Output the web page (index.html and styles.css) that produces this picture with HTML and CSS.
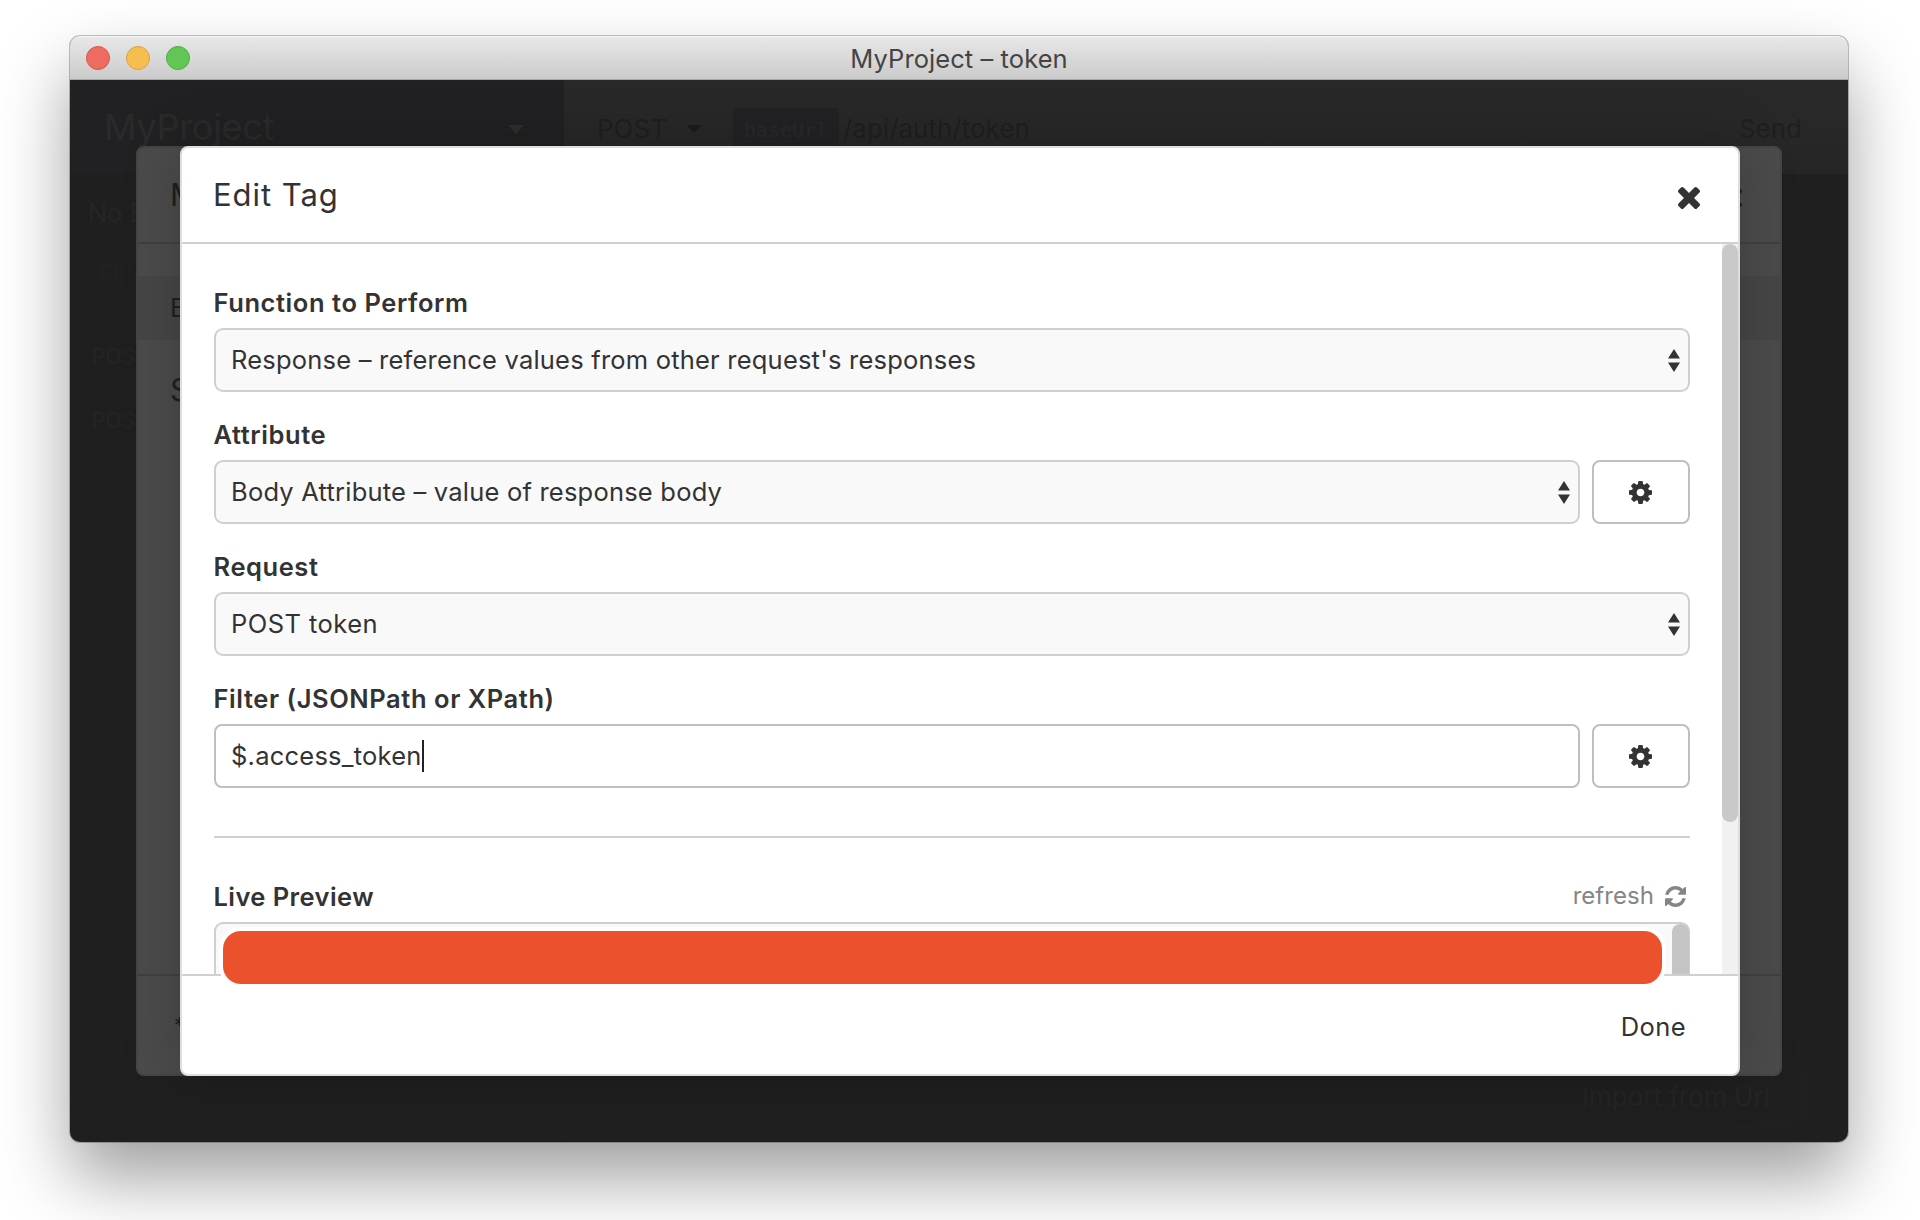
FILE: index.html
```html
<!DOCTYPE html>
<html lang="en">
<head>
<meta charset="utf-8">
<title>MyProject – token</title>
<link rel="stylesheet" href="styles.css">
</head>
<body>
<svg class="defs" aria-hidden="true">
  <symbol id="times" viewBox="302 366 1188 1188"><path d="M1490 1322q0 40-28 68l-136 136q-28 28-68 28t-68-28l-294-294-294 294q-28 28-68 28t-68-28l-136-136q-28-28-28-68t28-68l294-294-294-294q-28-28-28-68t28-68l136-136q28-28 68-28t68 28l294 294 294-294q28-28 68-28t68 28l136 136q28 28 28 68t-28 68l-294 294 294 294q28 28 28 68z"/></symbol>
  <symbol id="cog" viewBox="0 128 1536 1536"><path d="M1024 896q0-106-75-181t-181-75-181 75-75 181 75 181 181 75 181-75 75-181zm512-109v222q0 12-8 23t-20 13l-185 28q-19 54-39 91 35 50 107 138 10 12 10 25t-9 23q-27 37-99 108t-94 71q-12 0-26-9l-138-108q-44 23-91 38-16 136-29 186-7 28-36 28h-222q-14 0-24.500-8.500t-11.500-21.500l-28-184q-49-16-90-37l-141 107q-10 9-25 9-14 0-25-11-126-114-165-168-7-10-7-23 0-12 8-23 15-21 51-66.500t54-70.500q-27-50-41-99l-183-27q-13-2-21-12.500t-8-23.500v-222q0-12 8-23t19-13l186-28q14-46 39-92-40-57-107-138-10-12-10-24 0-10 9-23 26-36 98.500-107.500t94.500-71.500q13 0 26 10l138 107q44-23 91-38 16-136 29-186 7-28 36-28h222q14 0 24.500 8.500t11.500 21.500l28 184q49 16 90 37l142-107q9-9 24-9 13 0 25 10 129 119 165 170 7 8 7 22 0 12-8 23-15 21-51 66.500t-54 70.500q26 50 41 98l183 28q13 2 21 12.500t8 23.500z"/></symbol>
  <symbol id="refresh" viewBox="128 128 1536 1536"><path d="M1639 1056q0 5-1 7-64 268-268 434.500t-478 166.500q-146 0-282.500-55t-243.500-157l-129 129q-19 19-45 19t-45-19-19-45v-448q0-26 19-45t45-19h448q26 0 45 19t19 45-19 45l-137 137q71 66 161 102t187 36q134 0 250-65t186-179q11-17 53-117 8-23 30-23h192q13 0 22.500 9.500t9.500 22.500zm25-800v448q0 26-19 45t-45 19h-448q-26 0-45-19t-19-45 19-45l138-138q-148-137-349-137-134 0-250 65t-186 179q-11 17-53 117-8 23-30 23h-199q-13 0-22.500-9.500t-9.500-22.500v-7q65-268 270-434.500t480-166.500q146 0 284 55.500t245 156.500l130-129q19-19 45-19t45 19 19 45z"/></symbol>
  <symbol id="updown" viewBox="0 0 12 23"><path d="M6 0l6 9.500H0zM0 13.500h12L6 23z"/></symbol>
</svg>

<div class="window">
  <div class="titlebar">
    <div class="lights"><i class="red"></i><i class="amber"></i><i class="green"></i></div>
    <span class="window-title">MyProject – token</span>
  </div>

  <div class="app">
    <aside class="sidebar">
      <div class="workspace"><span>MyProject</span><i class="caret"></i></div>
      <div class="env">No E</div>
      <div class="search">Filte</div>
      <div class="request">POST</div>
      <div class="request">POST</div>
    </aside>
    <main class="main">
      <div class="urlbar">
        <span class="method">POST</span><i class="caret dark"></i>
        <span class="variable">baseUrl</span><span class="path">/api/auth/token</span>
        <span class="send">Send</span>
      </div>
      <div class="import">Import from Url</div>
    </main>
  </div>

  <section class="modal modal-back">
    <div class="modal-header"><span>M</span><svg class="icon-times"><use href="#times"/></svg></div>
    <div class="modal-body">
      <div class="env-item">B</div>
      <div class="env-heading">S</div>
    </div>
    <div class="modal-footer"><span class="note">*</span></div>
  </section>

  <section class="modal modal-front">
    <div class="modal-header"><span>Edit Tag</span><svg class="icon-times"><use href="#times"/></svg></div>
    <div class="modal-body">
      <div class="form">
        <div class="label">Function to Perform</div>
        <div class="row"><div class="select"><span>Response – reference values from other request's responses</span><svg class="icon-updown"><use href="#updown"/></svg></div></div>
        <div class="label">Attribute</div>
        <div class="row"><div class="select"><span>Body Attribute – value of response body</span><svg class="icon-updown"><use href="#updown"/></svg></div><div class="button"><svg class="icon-cog"><use href="#cog"/></svg></div></div>
        <div class="label">Request</div>
        <div class="row"><div class="select post"><span>POST token</span><svg class="icon-updown"><use href="#updown"/></svg></div></div>
        <div class="label">Filter (JSONPath or XPath)</div>
        <div class="row"><div class="input"><span>$.access_token</span><i class="cursor"></i></div><div class="button"><svg class="icon-cog"><use href="#cog"/></svg></div></div>
        <div class="rule"></div>
        <div class="label preview-label"><span>Live Preview</span><span class="refresh">refresh<svg class="icon-refresh"><use href="#refresh"/></svg></span></div>
        <div class="preview"><div class="preview-thumb"></div><div class="redaction"></div></div>
      </div>
      <div class="scrollbar"><div class="thumb"></div></div>
    </div>
    <div class="modal-footer"><span>Done</span></div>
  </section>
</div>
</body>
</html>
```
FILE: styles.css
```css
* { box-sizing: border-box; }

body {
  margin: 0;
  padding: 36px 72px 78px 70px;
  height: 1220px;
  overflow: hidden;
  background: #fff;
  color: #333;
  font: 25.5px/34px Inter, "Liberation Sans", sans-serif;
  white-space: nowrap;
}

svg { display: block; fill: currentColor; flex: none; }
.defs { position: absolute; width: 0; height: 0; }

.window {
  position: relative;
  display: flex;
  flex-direction: column;
  height: 1106px;
  border-radius: 10px;
  background: #1f1f1f;
  box-shadow: 0 0 0 1px rgba(0, 0, 0, .24), 0 36px 70px rgba(0, 0, 0, .38);
}

.titlebar {
  display: grid;
  grid-template-columns: 1fr auto 1fr;
  align-items: center;
  height: 44px;
  padding: 0 16px;
  border-bottom: 1px solid #a6a6a6;
  border-radius: 10px 10px 0 0;
  background: linear-gradient(#e8e8e8, #cbcbcb);
  box-shadow: inset 0 1px #f6f6f6;
}
.lights { display: flex; gap: 16px; }
.lights i { width: 24px; height: 24px; border: 1px solid; border-radius: 50%; }
.red { background: #ed6b60; border-color: #d9574c !important; }
.amber { background: #f6be50; border-color: #dba33b !important; }
.green { background: #62c655; border-color: #4dae41 !important; }
.window-title { padding-top: 2px; color: #444; letter-spacing: .08px; }

.app { flex: 1; display: flex; min-height: 0; overflow: hidden; border-radius: 0 0 10px 10px; }
.sidebar { width: 494px; border-right: 1px solid #212121; color: #292929; }
.workspace {
  display: flex;
  align-items: center;
  justify-content: space-between;
  height: 94px;
  padding: 0 39px 0 34px;
  background: #212123;
  color: #2a2a2a;
  font-size: 36px;
  letter-spacing: -.3px;
}
.caret { border: 8px solid transparent; border-top: 9px solid #2e2e2e; border-bottom: 0; margin-top: 5px; }
.caret.dark { border-width: 8px 7px 0; border-top-color: #1c1c1c; margin: 0 32px 0 20px; }
.env { padding: 22px 18px 17px; font-size: 25.5px; color: #252525; }
.search { width: 440px; height: 54px; margin-left: 16px; padding: 9px 11px; border: 1px solid #202020; border-radius: 6px; color: #212121; }
.request { height: 64px; padding: 15px 22px; font-size: 21px; color: #252520; }
.search + .request { margin-top: 24px; }

.main { flex: 1; display: flex; flex-direction: column; justify-content: space-between; align-items: flex-end; }
.urlbar {
  display: flex;
  align-items: center;
  width: 100%;
  height: 94px;
  padding: 3px 46px 0 33px;
  background: linear-gradient(#282828 50%, #252525);
  color: #1f1f1f;
  font-size: 26px;
}
.variable { width: 106px; height: 42px; padding-top: 4px; border-radius: 4px; background: #222225; color: #292929; text-align: center; font: 20px/36px "DejaVu Sans Mono", monospace; }
.path { margin-left: 4px; }
.send { margin-left: auto; }
.import { width: 254px; height: 62px; margin: 0 45px 15px 0; border: 2px solid #202020; border-radius: 6px; color: #252525; text-align: center; font-size: 26px; line-height: 59px; }

.modal {
  position: absolute;
  top: 110px;
  bottom: 66px;
  display: flex;
  flex-direction: column;
  border: 2px solid #dedede;
  border-radius: 8px;
  background: #fff;
}
.modal-front { left: 110px; right: 108px; box-shadow: 0 0 60px rgba(0, 0, 0, .2); }
.modal-back { left: 66px; right: 66px; border-color: #454545; background: #4b4b4b; color: #1f1f1f; overflow: hidden; }

.modal-header {
  display: flex;
  align-items: center;
  justify-content: space-between;
  height: 96px;
  padding: 0 38px 0 31px;
  border-bottom: 2px solid #d0d0d0;
  font-size: 31px;
  letter-spacing: .95px;
}
.modal-body { flex: 1; display: flex; min-height: 0; }
.modal-footer {
  display: flex;
  align-items: center;
  justify-content: flex-end;
  height: 100px;
  padding: 3px 52px 0 36px;
  border-top: 2px solid #d0d0d0;
  letter-spacing: .4px;
}
.icon-times { width: 22px; height: 22px; margin-top: 5px; }

.modal-back .modal-header { padding-left: 32px; }
.modal-back .modal-header, .modal-back .modal-footer { border-color: #404040; }
.modal-back .modal-body { display: block; padding-top: 32px; }
.modal-back .modal-footer { justify-content: flex-start; font-size: 22px; padding-top: 0; }
.env-item { height: 64px; padding: 15px 32px; background: #464646; }
.env-heading { padding: 33px 32px; font-size: 31px; }

.form { flex: 1; display: flex; flex-direction: column; min-width: 0; padding: 42px 32px 0; }
.label { height: 34px; margin-bottom: 8px; font-weight: 600; letter-spacing: .57px; text-indent: -.5px; }
.row { display: flex; gap: 12px; margin-bottom: 26px; }
.select, .input {
  flex: 1;
  display: flex;
  align-items: center;
  height: 64px;
  padding: 0 8px 0 15px;
  border: 2px solid #cfcfcf;
  border-radius: 9px;
  background: #f9f9f9;
  letter-spacing: .21px;
}
.select { justify-content: space-between; }
.post { letter-spacing: .45px; }
.input { border-color: #bfbfbf; border-radius: 8px; background: #fff; letter-spacing: .23px; }
.cursor { width: 2px; height: 32px; background: #222; }
.button {
  display: flex;
  align-items: center;
  justify-content: center;
  padding-right: 1px;
  width: 98px;
  height: 64px;
  border: 2px solid #bfbfbf;
  border-radius: 8px;
}
.icon-updown { width: 12px; height: 23px; }
.icon-cog { width: 23px; height: 23px; }
.rule { height: 2px; margin: 22px 0 42px; background: #d0d0d0; }
.preview-label { display: flex; justify-content: space-between; letter-spacing: .42px; }
.refresh { display: flex; align-items: center; gap: 11px; padding-right: 4px; color: #858585; font-size: 24px; font-weight: 400; line-height: 32px; letter-spacing: .05px; height: 32px; }
.icon-refresh { width: 21px; height: 21px; }

.preview {
  position: relative;
  display: flex;
  justify-content: flex-end;
  height: 52px;
  border: 2px solid #cfcfcf;
  border-bottom: 0;
  border-radius: 9px 9px 0 0;
  background: #f9f9f9;
}
.preview-thumb { width: 17px; margin-right: -1px; border-radius: 8px 8px 0 0; background: #c5c5c5; }
/* Covers the token value, running over the footer's rule. */
.redaction {
  position: absolute;
  z-index: 1;
  left: 7px;
  top: 7px;
  width: 1439px;
  height: 53px;
  border-radius: 18px;
  background: #ec512d;
  box-shadow: 0 0 0 4px #fff;
}

.scrollbar { width: 16px; background: #f1f1f1; }
.thumb { height: 578px; border-radius: 8px; background: #c9c9c9; }
```
